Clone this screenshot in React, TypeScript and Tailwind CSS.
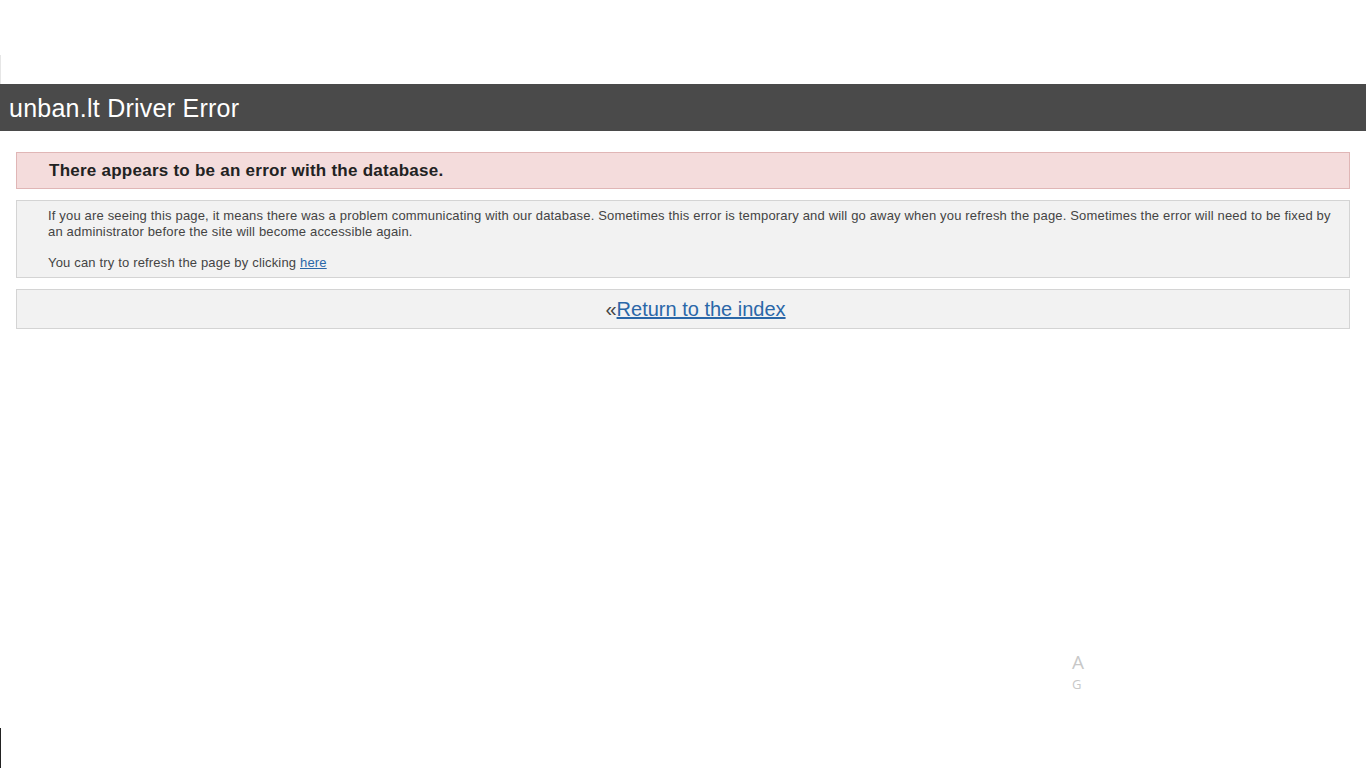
export default function App() {
  return (
    <div className="relative min-h-[768px] bg-white font-['Liberation_Sans',Arial,sans-serif]">
      <div className="h-[84px]" />
      <div className="flex h-[47px] items-center bg-[#4a4a4a] pl-[9px]">
        <h1 className="pt-[2px] text-[25px] leading-none tracking-[0.25px] text-white">unban.lt Driver Error</h1>
      </div>
      <div className="flex flex-col gap-[11px] px-4 pt-[21px]">
        <div className="flex h-[37px] items-center border border-[#e0b6b6] bg-[#f4dcdc] pl-[32px]">
          <h2 className="text-[17px] font-bold leading-none tracking-[0.25px] text-[#222222]">
            There appears to be an error with the database.
          </h2>
        </div>
        <div className="border border-[#d4d4d4] bg-[#f2f2f2] pb-[6px] pl-[31px] pr-[12px] pt-[7px] text-[13px] leading-[16px] tracking-[0.17px] text-[#444444]">
          <p>
            If you are seeing this page, it means there was a problem communicating with our database. Sometimes this error is temporary and will go away when you refresh the page. Sometimes the error will need to be fixed by an administrator before the site will become accessible again.
          </p>
          <p className="mt-[15px]">
            You can try to refresh the page by clicking{" "}
            <a href="#" className="text-[#2a67a8] underline">here</a>
          </p>
        </div>
        <div className="flex h-[40px] items-center justify-center border border-[#d4d4d4] bg-[#f2f2f2] pl-[25px] text-[20px] text-[#444444]">
          <span>«</span>
          <a href="#" className="text-[#2a67a8] underline">Return to the index</a>
        </div>
      </div>
      <div className="absolute left-0 top-[55px] h-[29px] w-px bg-[#e6e6e6]" />
      <div className="absolute bottom-0 left-0 h-[40px] w-px bg-[#222222]" />
      <div className="absolute left-[1072px] top-[651px] font-['Open_Sans',sans-serif] text-[#c8c8c8]">
        <div className="text-[19px] leading-[22px]">A</div>
        <div className="text-[13px] leading-[22px]">G</div>
      </div>
    </div>
  );
}
